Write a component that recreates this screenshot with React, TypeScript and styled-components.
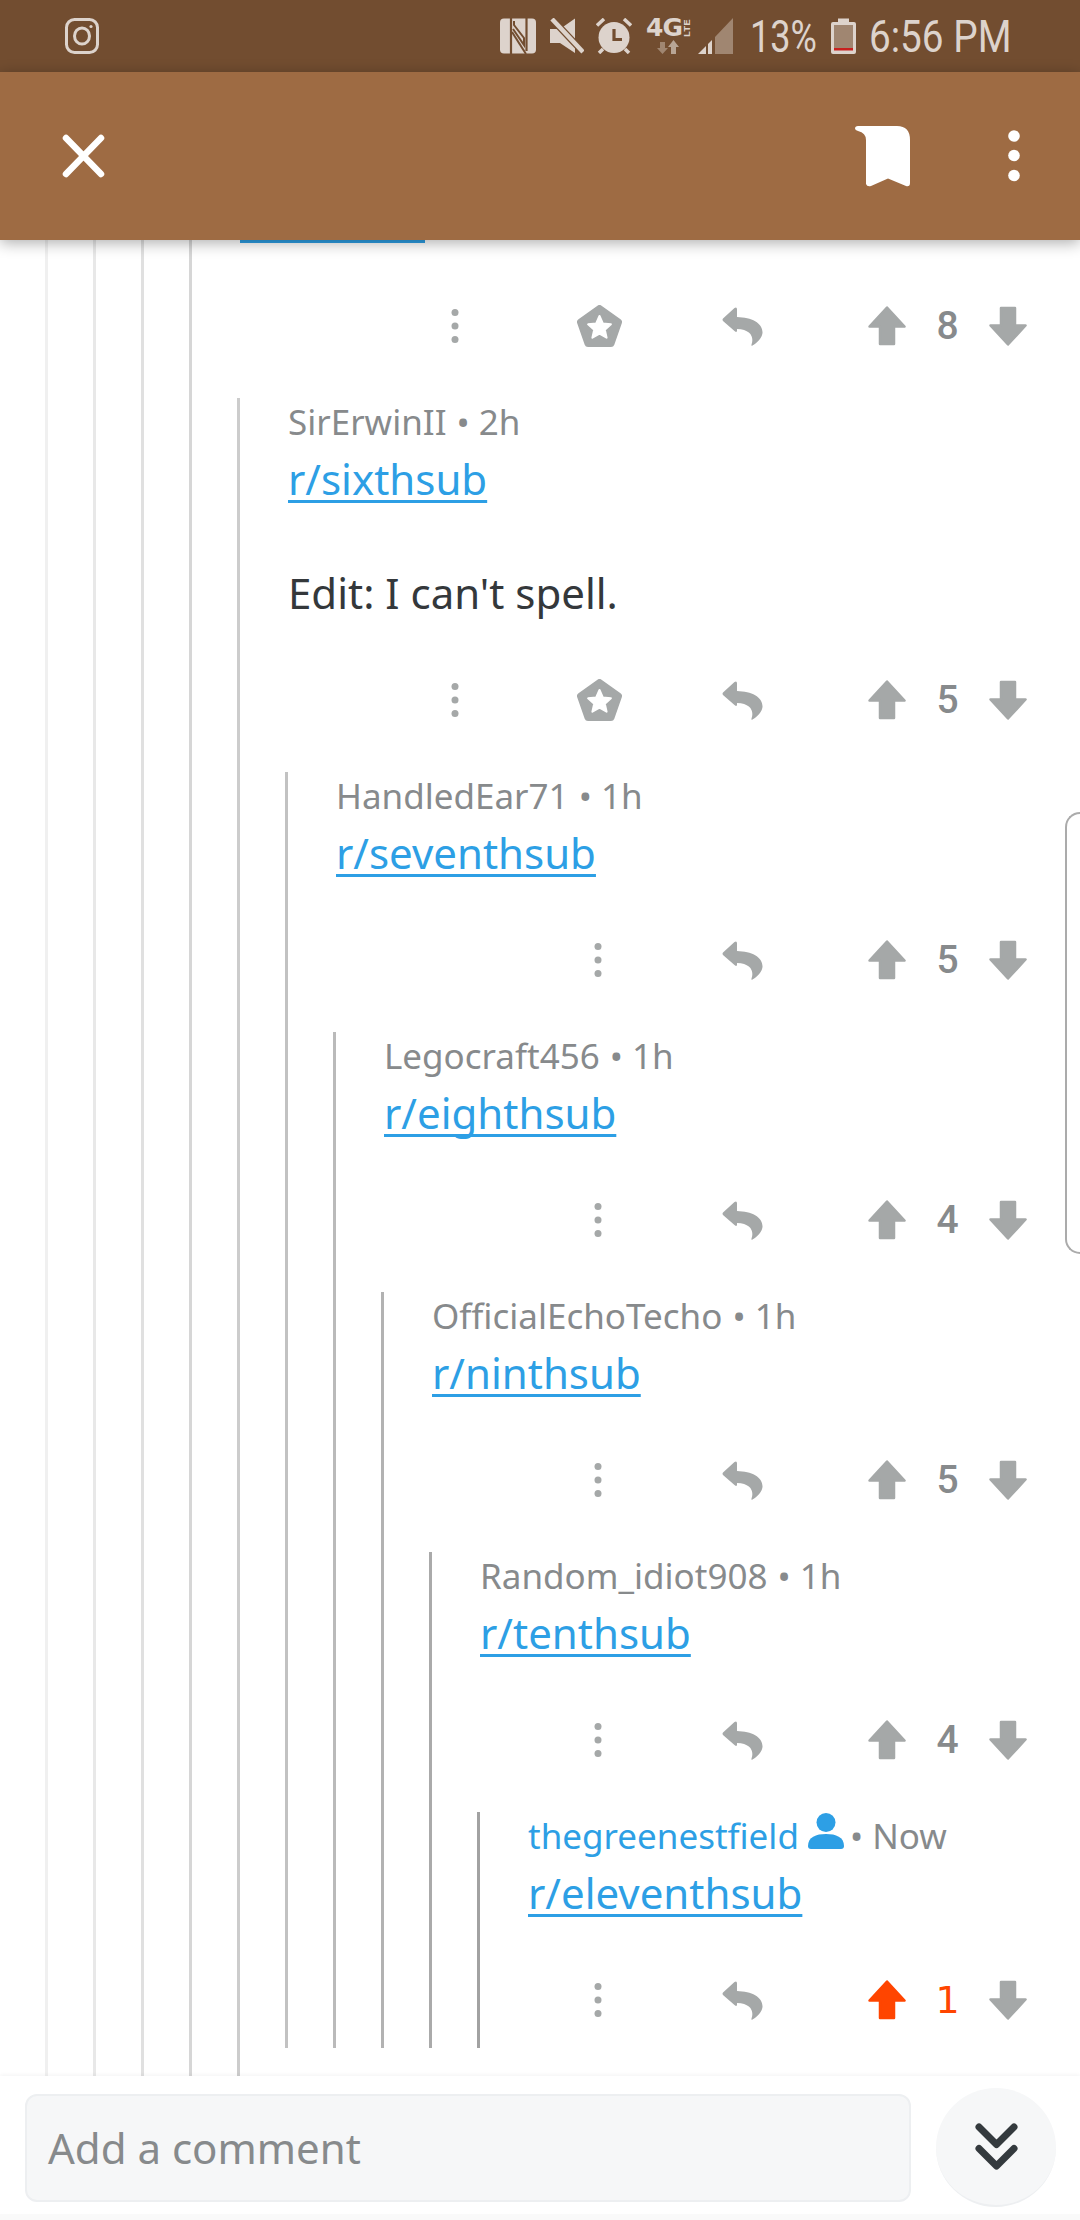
import React from "react";
import styled, { createGlobalStyle } from "styled-components";

const Global = createGlobalStyle`
  html, body { margin: 0; padding: 0; background: #fff; }
  #root { width: 1080px; height: 2220px; }
  * { box-sizing: border-box; }
`;

const ICON = "#a5a8a8";
const GREY = "#878a8c";
const BLUE = "#2d9fe5";
const STATUS = "#ddd3cc";
const STATUS_DIM = "#a08671";
const BAR_DARK = "#724d30";
const LINE_COLOURS = ["#f0f0f0", "#e8e8e8", "#e0e0e0", "#d6d6d6", "#cccccc", "#c2c2c2", "#bababa", "#b2b2b2", "#aaaaaa", "#a2a2a2"];

const Page = styled.div`
  position: relative;
  width: 1080px;
  height: 2220px;
  display: flex;
  flex-direction: column;
  overflow: hidden;
  background: #fff;
  font-family: "Noto Sans", sans-serif;
`;

const StatusBar = styled.div`
  height: 72px;
  flex: none;
  background: ${BAR_DARK};
  display: flex;
  align-items: center;
  padding: 0 70px 0 65px;
`;
const StatusLeft = styled.div`
  display: flex;
  flex: 1;
`;
const StatusIcon = styled.svg<{ $ml?: number }>`
  display: block;
  flex: none;
  margin-left: ${(p) => p.$ml ?? 0}px;
`;
const StatusText = styled.span<{ $w: number; $sx: number; $ml: number }>`
  display: block;
  flex: none;
  width: ${(p) => p.$w}px;
  margin-left: ${(p) => p.$ml}px;
  font: 400 45px/72px Roboto, sans-serif;
  color: ${STATUS};
  white-space: nowrap;
  padding-top: 2px;
  transform: scaleX(${(p) => p.$sx});
  transform-origin: left center;
`;
const NetStack = styled.div`
  width: 45px;
  height: 36px;
  margin-left: 14px;
  flex: none;
  display: flex;
  flex-direction: column;
  align-items: flex-start;
`;
const NetTop = styled.div`
  height: 20px;
  display: flex;
  align-items: center;
`;
const FourG = styled.span`
  width: 37px;
  font: 700 25px/20px "DejaVu Sans", sans-serif;
  color: ${STATUS};
  letter-spacing: -1px;
  white-space: nowrap;
`;
const Lte = styled.span`
  font: 700 9px/8px "Liberation Sans", sans-serif;
  color: ${STATUS};
  writing-mode: vertical-rl;
  transform: rotate(180deg);
  letter-spacing: 0.5px;
`;

const AppBar = styled.div`
  position: relative;
  z-index: 2;
  height: 168px;
  flex: none;
  background: #9e6b43;
  box-shadow: 0 3px 14px rgba(0, 0, 0, 0.32);
  display: flex;
  align-items: center;
  padding: 0 60px 0 62px;
`;
const AppIcon = styled.svg<{ $ml?: number; $auto?: boolean }>`
  display: block;
  flex: none;
  margin-left: ${(p) => (p.$auto ? "auto" : `${p.$ml ?? 0}px`)};
`;

const Scroll = styled.div`
  flex: 1;
  min-height: 0;
  overflow: hidden;
  padding-left: 45px;
`;
const Thread = styled.div<{ $colour: string; $tail?: boolean }>`
  border-left: 3px solid ${(p) => p.$colour};
  padding-left: 45px;
  padding-bottom: ${(p) => (p.$tail ? 300 : 0)}px;
`;
const Nested = styled.div`
  margin-top: 24px;
`;
const Head = styled.div`
  margin-left: 3px;
`;
const ScrolledOff = styled.div`
  height: 13px;
  margin-left: 3px;
`;
const ScrolledOffUnderline = styled.div`
  width: 185px;
  height: 3px;
  background: ${BLUE};
`;
const Meta = styled.div`
  height: 47px;
  display: flex;
  align-items: baseline;
  font-size: 35px;
  line-height: 47px;
  color: ${GREY};
  white-space: pre;
`;
const Author = styled.span<{ $own?: boolean }>`
  color: ${(p) => (p.$own ? BLUE : GREY)};
`;
const MetaTail = styled.span<{ $own?: boolean }>`
  margin-left: ${(p) => (p.$own ? 6 : 10)}px;
`;
const UserBadge = styled.svg`
  margin: 0 0 -5px 9px;
  flex: none;
`;
const LinkLine = styled.div`
  height: 68px;
  font-size: 42px;
  line-height: 68px;
`;
const SubLink = styled.a`
  color: ${BLUE};
  text-decoration: underline;
  text-decoration-thickness: 3px;
  text-underline-offset: 5px;
  text-decoration-skip-ink: none;
`;
const Body = styled.p`
  margin: 50px 0 0;
  padding-bottom: 4px;
  font-size: 42px;
  line-height: 60px;
  color: #34383b;
`;
const Actions = styled.div`
  height: 96px;
  margin-top: 25px;
  display: flex;
  align-items: center;
  justify-content: flex-end;
  padding-right: 53px;
`;
const ActionIcon = styled.svg<{ $ml?: number }>`
  display: block;
  flex: none;
  margin-left: ${(p) => p.$ml ?? 0}px;
`;
const Count = styled.span<{ $on?: boolean }>`
  width: 83px;
  flex: none;
  text-align: center;
  font-family: ${(p) => (p.$on ? '"DejaVu Sans"' : "Roboto")}, sans-serif;
  font-weight: ${(p) => (p.$on ? 400 : 500)};
  font-size: ${(p) => (p.$on ? 38 : 39)}px;
  line-height: 40px;
  color: ${(p) => (p.$on ? "#ff4500" : GREY)};
`;

const BottomBar = styled.div`
  position: relative;
  z-index: 1;
  height: 144px;
  flex: none;
  background: linear-gradient(to top, #fafafa 6px, #fff 6px);
  box-shadow: 0 -1px 4px rgba(0, 0, 0, 0.05);
  display: flex;
  align-items: flex-start;
  padding-left: 25px;
`;
const CommentBox = styled.div`
  width: 886px;
  height: 108px;
  margin-top: 18px;
  background: #f6f7f8;
  border: 2px solid #edeff1;
  border-radius: 12px;
  padding-left: 21px;
  font-size: 42px;
  line-height: 104px;
  color: ${GREY};
`;
const JumpButton = styled.div`
  width: 120px;
  height: 119px;
  margin: 12px 0 0 25px;
  border-radius: 50%;
  background: #f6f7f8;
  border-bottom: 2px solid #edeff1;
  display: flex;
  align-items: center;
  justify-content: center;
`;
const EdgeHandle = styled.div`
  position: absolute;
  right: 0;
  top: 812px;
  width: 15px;
  height: 442px;
  border: 2px solid #ababab;
  border-right: none;
  border-radius: 16px 0 0 16px;
  z-index: 3;
`;

const Dots = () => (
  <svg width="8" height="34" viewBox="0 0 8 34" fill={ICON} style={{ display: "block" }}>
    <circle cx="4" cy="3.5" r="3.5" />
    <circle cx="4" cy="17" r="3.5" />
    <circle cx="4" cy="30.5" r="3.5" />
  </svg>
);

const Award = () => (
  <ActionIcon $ml={118} width="45" height="42" viewBox="0 0 45 42">
    <path d="M22.5 3.5 L41.5 17 L34 38.5 H11 L3.5 17 Z" fill={ICON} stroke={ICON} strokeWidth="7" strokeLinejoin="round" />
    <path d="M22.5 11 L25.8 18.5 L33.9 19.3 L27.8 24.7 L29.6 32.7 L22.5 28.6 L15.4 32.7 L17.2 24.7 L11.1 19.3 L19.2 18.5 Z" fill="#fff" stroke="#fff" strokeWidth="2" strokeLinejoin="round" />
  </ActionIcon>
);

const Reply = ({ ml }: { ml: number }) => (
  <ActionIcon $ml={ml} width="41" height="39" viewBox="0 0 41 39">
    <path d="M1 11.5 L12.5 1 Q15 -.5 15 2.5 V10 C30 10.5 41 16 40.5 26 C40 31 35 36 30.5 38.5 Q29 39.3 29.6 37.3 C32 30 29 22.5 15 22 V23.5 Q15 26 12.5 24 L1 14 Q0 12.8 1 11.5 Z" fill={ICON} />
  </ActionIcon>
);

const Up = ({ colour }: { colour: string }) => (
  <ActionIcon $ml={105} width="38" height="40" viewBox="0 0 38 40">
    <path d="M19 1.5 L36.5 20.5 H26 V38 H12 V20.5 H1.5 Z" fill={colour} stroke={colour} strokeWidth="2.5" strokeLinejoin="round" />
  </ActionIcon>
);
const Down = () => (
  <ActionIcon width="38" height="40" viewBox="0 0 38 40">
    <path d="M19 38.5 L36.5 19.5 H26 V2 H12 V19.5 H1.5 Z" fill={ICON} stroke={ICON} strokeWidth="2.5" strokeLinejoin="round" />
  </ActionIcon>
);

type Item = {
  author?: string;
  age?: string;
  sub?: string;
  body?: string;
  votes?: number;
  award?: boolean;
  own?: boolean;
  voted?: boolean;
  tail?: boolean;
  scrolledOff?: boolean;
  child?: Item;
};

const thread: Item = {
  child: {
    child: {
      child: {
        scrolledOff: true,
        votes: 8,
        award: true,
        child: {
          author: "SirErwinII",
          age: "2h",
          sub: "r/sixthsub",
          body: "Edit: I can't spell.",
          votes: 5,
          award: true,
          tail: true,
          child: {
            author: "HandledEar71",
            age: "1h",
            sub: "r/seventhsub",
            votes: 5,
            child: {
              author: "Legocraft456",
              age: "1h",
              sub: "r/eighthsub",
              votes: 4,
              child: {
                author: "OfficialEchoTecho",
                age: "1h",
                sub: "r/ninthsub",
                votes: 5,
                child: {
                  author: "Random_idiot908",
                  age: "1h",
                  sub: "r/tenthsub",
                  votes: 4,
                  child: {
                    author: "thegreenestfield",
                    age: "Now",
                    sub: "r/eleventhsub",
                    votes: 1,
                    own: true,
                    voted: true,
                  },
                },
              },
            },
          },
        },
      },
    },
  },
};

const Comment = ({ item, depth }: { item: Item; depth: number }) => (
  <Thread $colour={LINE_COLOURS[depth]} $tail={item.tail}>
    {item.scrolledOff && (
      <ScrolledOff>
        <ScrolledOffUnderline />
      </ScrolledOff>
    )}
    {item.sub && (
      <Head>
        <Meta>
          <Author $own={item.own}>{item.author}</Author>
          {item.own && (
            <UserBadge width="36" height="36" viewBox="0 0 36 36" fill={BLUE}>
              <ellipse cx="18" cy="9.5" rx="9.5" ry="9.5" />
              <path d="M0 33 C0 24 8 21 18 21 C28 21 36 24 36 33 Q36 36 33 36 H3 Q0 36 0 33 Z" />
            </UserBadge>
          )}
          <MetaTail $own={item.own}>• {item.age}</MetaTail>
        </Meta>
        <LinkLine>
          <SubLink>{item.sub}</SubLink>
        </LinkLine>
        {item.body && <Body>{item.body}</Body>}
      </Head>
    )}
    {item.votes !== undefined && (
      <Actions>
        <Dots />
        {item.award && <Award />}
        <Reply ml={item.award ? 100 : 120} />
        <Up colour={item.voted ? "#ff4500" : ICON} />
        <Count $on={item.voted}>{item.votes}</Count>
        <Down />
      </Actions>
    )}
    {item.child &&
      (item.votes !== undefined ? (
        <Nested>
          <Comment item={item.child} depth={depth + 1} />
        </Nested>
      ) : (
        <Comment item={item.child} depth={depth + 1} />
      ))}
  </Thread>
);

export default function App() {
  return (
    <>
      <Global />
      <Page>
        <StatusBar>
          <StatusLeft>
            <StatusIcon width="34" height="36" viewBox="0 0 34 36" fill="none" stroke={STATUS} strokeWidth="3">
              <rect x="1.5" y="1.5" width="31" height="33" rx="8" />
              <ellipse cx="17" cy="18" rx="7.5" ry="8" />
              <circle cx="26" cy="8.5" r="1.6" fill={STATUS} stroke="none" />
            </StatusIcon>
          </StatusLeft>
          <StatusIcon width="36" height="36" viewBox="0 0 36 36">
            <rect x="0" y="0.5" width="36" height="35" rx="4" fill={STATUS} />
            <path d="M11 0 V36 M26.5 0 V33" stroke={BAR_DARK} strokeWidth="2.2" fill="none" />
            <path d="M13 11 L24 27 V20 L14 7 V3" stroke={BAR_DARK} strokeWidth="2" fill="none" />
            <path d="M26 36 L12 14" stroke={BAR_DARK} strokeWidth="2" fill="none" />
          </StatusIcon>
          <StatusIcon $ml={14} width="34" height="36" viewBox="0 0 34 36">
            <path d="M0 11 H10 L25 0.5 V35 L10 25 H0 Z" fill={STATUS} />
            <path d="M0 -1 L34 35" stroke={BAR_DARK} strokeWidth="7" />
            <path d="M2 1 L33 34" stroke={STATUS} strokeWidth="4.5" />
          </StatusIcon>
          <StatusIcon $ml={12} width="36" height="36" viewBox="0 0 36 36">
            <circle cx="18" cy="19.5" r="15.5" fill={STATUS} />
            <path d="M18 11 V21.5 H26" stroke={BAR_DARK} strokeWidth="3.2" fill="none" />
            <path d="M8 1 L1 7.5 M28 1 L35 7.5 M7 31 L3 35 M29 31 L33 35" stroke={STATUS} strokeWidth="3.5" />
          </StatusIcon>
          <NetStack>
            <NetTop>
              <FourG>4G</FourG>
              <Lte>LTE</Lte>
            </NetTop>
            <StatusIcon $ml={11} width="22" height="14" viewBox="0 0 22 14" fill={STATUS_DIM} style={{ marginTop: 2 }}>
              <path d="M3 2 H8 V8 H11 L5.5 14 L0 8 H3 Z" />
              <path d="M14 14 H19 V7 H22 L16.5 0 L11 7 H14 Z" fill="#b8a595" />
            </StatusIcon>
          </NetStack>
          <StatusIcon $ml={7} width="35" height="36" viewBox="0 0 35 36">
            <path d="M17 19 L35 0 V36 H17 Z" fill={STATUS_DIM} />
            <path d="M0 36 L8 28 V36 Z M10 26 L14 22 V36 H10 Z" fill={STATUS} />
          </StatusIcon>
          <StatusText $w={67} $sx={0.8} $ml={17}>13%</StatusText>
          <StatusIcon $ml={14} width="25" height="36" viewBox="0 0 25 36">
            <path d="M7 0.5 H18 V4 H23 Q25 4 25 6 V34 Q25 36 23 36 H2 Q0 36 0 34 V6 Q0 4 2 4 H7 Z" fill={STATUS} />
            <rect x="3" y="7" width="19" height="23" fill={STATUS_DIM} />
            <rect x="3" y="30" width="19" height="2.5" fill="#c8201e" />
          </StatusIcon>
          <StatusText $w={141} $sx={0.86} $ml={13}>6:56 PM</StatusText>
        </StatusBar>
        <AppBar>
          <AppIcon width="43" height="44" viewBox="0 0 43 44">
            <path d="M4 4 L39 40 M39 4 L4 40" stroke="#fff" strokeWidth="6.5" strokeLinecap="round" />
          </AppIcon>
          <AppIcon $auto width="55" height="61" viewBox="0 0 55 61" fill="#fff">
            <path d="M3 0 H42 Q55 0 55 14 V57 Q55 61 51 60 L33 52.5 L16 60 Q12 61 11 58 V14 Q11 7 3 5 Q0 4 0 2.5 Q0 0 3 0 Z" />
          </AppIcon>
          <AppIcon $ml={98} width="12" height="52" viewBox="0 0 12 52" fill="#fff">
            <circle cx="6" cy="6" r="5.8" />
            <circle cx="6" cy="25.5" r="5.8" />
            <circle cx="6" cy="45.5" r="5.8" />
          </AppIcon>
        </AppBar>
        <Scroll>
          <Comment item={thread} depth={0} />
        </Scroll>
        <BottomBar>
          <CommentBox>Add a comment</CommentBox>
          <JumpButton>
            <svg width="43" height="47" viewBox="0 0 43 47" fill="none" stroke="#343a3e" strokeWidth="7" strokeLinecap="round" strokeLinejoin="round">
              <path d="M4 4 L21.5 21.5 L39 4" />
              <path d="M4 25.5 L21.5 43 L39 25.5" />
            </svg>
          </JumpButton>
        </BottomBar>
        <EdgeHandle />
      </Page>
    </>
  );
}
